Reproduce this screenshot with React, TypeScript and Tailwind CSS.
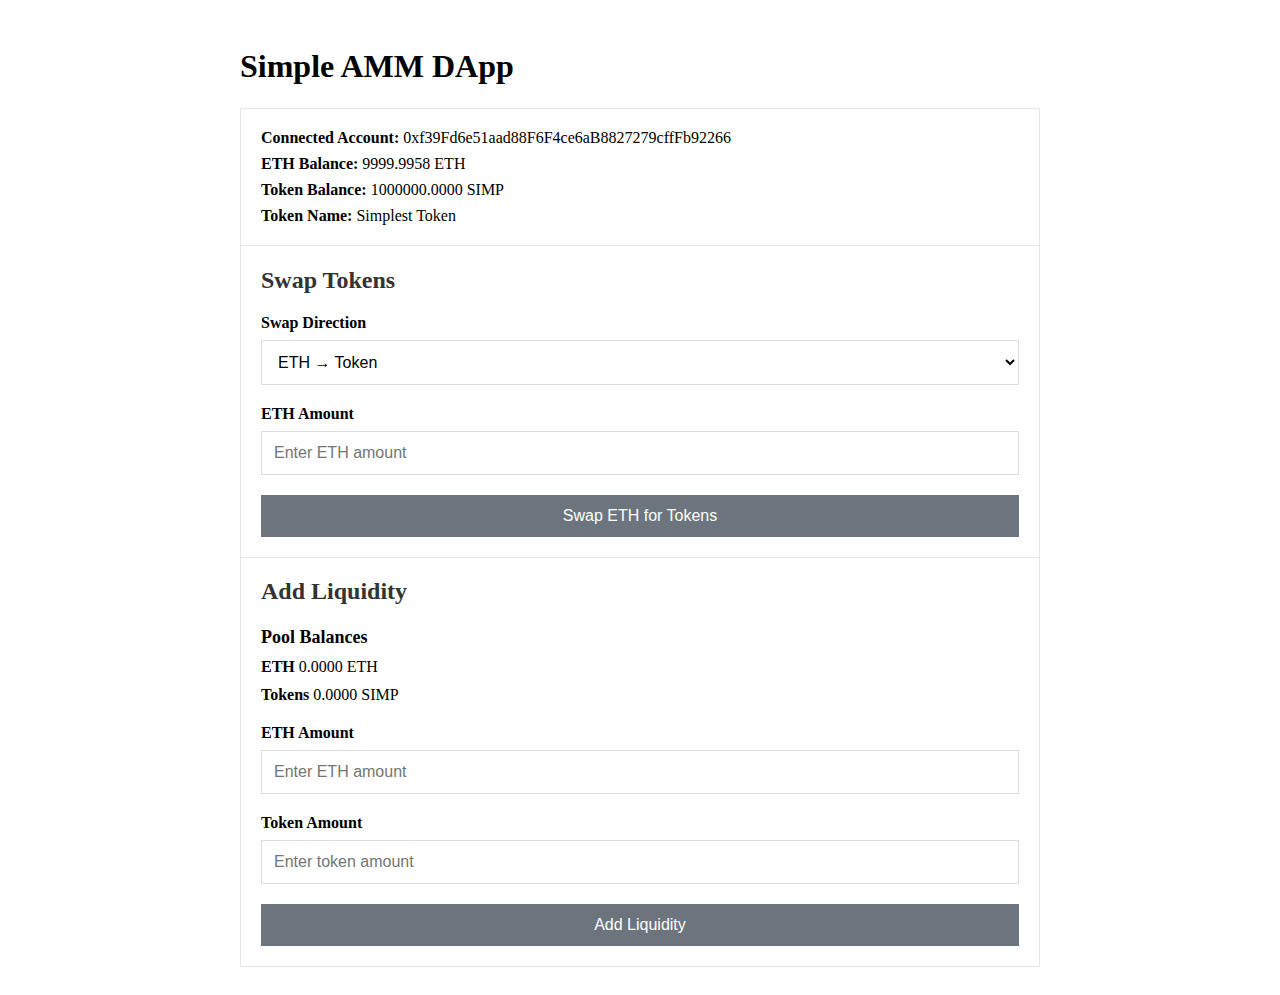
import { useState } from "react";

const serif = { fontFamily: "'Liberation Serif', 'Times New Roman', serif" };
const sans = { fontFamily: "'Liberation Sans', Arial, sans-serif" };

export default function App() {
  const [direction, setDirection] = useState("ethToToken");
  const [swapAmount, setSwapAmount] = useState("");
  const [ethAmount, setEthAmount] = useState("");
  const [tokenAmount, setTokenAmount] = useState("");

  const fieldClass =
    "block w-full border border-[#dddddd] bg-white px-3 text-[16px] text-black placeholder-[#757575] outline-none";

  return (
    <div className="min-h-screen bg-white text-black" style={serif}>
      <div className="w-[800px] mx-auto pt-[48px] pb-[28px]">
        <h1 className="text-[32px] font-bold leading-[37px] mb-[23px]">Simple AMM DApp</h1>

        <div className="border border-[#e6e6e6]">
          {/* account info */}
          <div className="px-5 pt-[16px] pb-[16px] text-[16px] leading-[26px]">
            <p><b>Connected Account:</b> 0xf39Fd6e51aad88F6F4ce6aB8827279cffFb92266</p>
            <p><b>ETH Balance:</b> 9999.9958 ETH</p>
            <p><b>Token Balance:</b> 1000000.0000 SIMP</p>
            <p><b>Token Name:</b> Simplest Token</p>
          </div>

          {/* swap */}
          <div className="border-t border-[#e6e6e6] px-5 pt-[20px] pb-[20px]">
            <h2 className="text-[24px] font-bold leading-[28px] text-[#333333] mb-[20px]">Swap Tokens</h2>
            <label className="block text-[16px] font-bold leading-[18px] mb-[8px]">Swap Direction</label>
            <select
              value={direction}
              onChange={e => setDirection(e.target.value)}
              className={fieldClass + " h-[45px]"}
              style={sans}
            >
              <option value="ethToToken">ETH → Token</option>
              <option value="tokenToEth">Token → ETH</option>
            </select>
            <label className="block text-[16px] font-bold leading-[18px] mt-[20px] mb-[8px]">
              {direction === "ethToToken" ? "ETH Amount" : "Token Amount"}
            </label>
            <input
              value={swapAmount}
              onChange={e => setSwapAmount(e.target.value)}
              placeholder={direction === "ethToToken" ? "Enter ETH amount" : "Enter token amount"}
              className={fieldClass + " h-[44px]"}
              style={sans}
            />
            <button
              className="mt-[20px] block w-full h-[42px] bg-[#6c757d] text-white text-[16px]"
              style={sans}
            >
              {direction === "ethToToken" ? "Swap ETH for Tokens" : "Swap Tokens for ETH"}
            </button>
          </div>

          {/* liquidity */}
          <div className="border-t border-[#e6e6e6] px-5 pt-[19px] pb-[20px]">
            <h2 className="text-[24px] font-bold leading-[28px] text-[#333333] mb-[21px]">Add Liquidity</h2>
            <h3 className="text-[18px] font-bold leading-[22px] mb-[5px]">Pool Balances</h3>
            <p className="text-[16px] leading-[28px]"><b>ETH</b> 0.0000 ETH</p>
            <p className="text-[16px] leading-[28px]"><b>Tokens</b> 0.0000 SIMP</p>
            <label className="block text-[16px] font-bold leading-[18px] mt-[15px] mb-[8px]">ETH Amount</label>
            <input
              value={ethAmount}
              onChange={e => setEthAmount(e.target.value)}
              placeholder="Enter ETH amount"
              className={fieldClass + " h-[44px]"}
              style={sans}
            />
            <label className="block text-[16px] font-bold leading-[18px] mt-[20px] mb-[8px]">Token Amount</label>
            <input
              value={tokenAmount}
              onChange={e => setTokenAmount(e.target.value)}
              placeholder="Enter token amount"
              className={fieldClass + " h-[44px]"}
              style={sans}
            />
            <button
              className="mt-[20px] block w-full h-[42px] bg-[#6c757d] text-white text-[16px]"
              style={sans}
            >
              Add Liquidity
            </button>
          </div>
        </div>
      </div>
    </div>
  );
}
